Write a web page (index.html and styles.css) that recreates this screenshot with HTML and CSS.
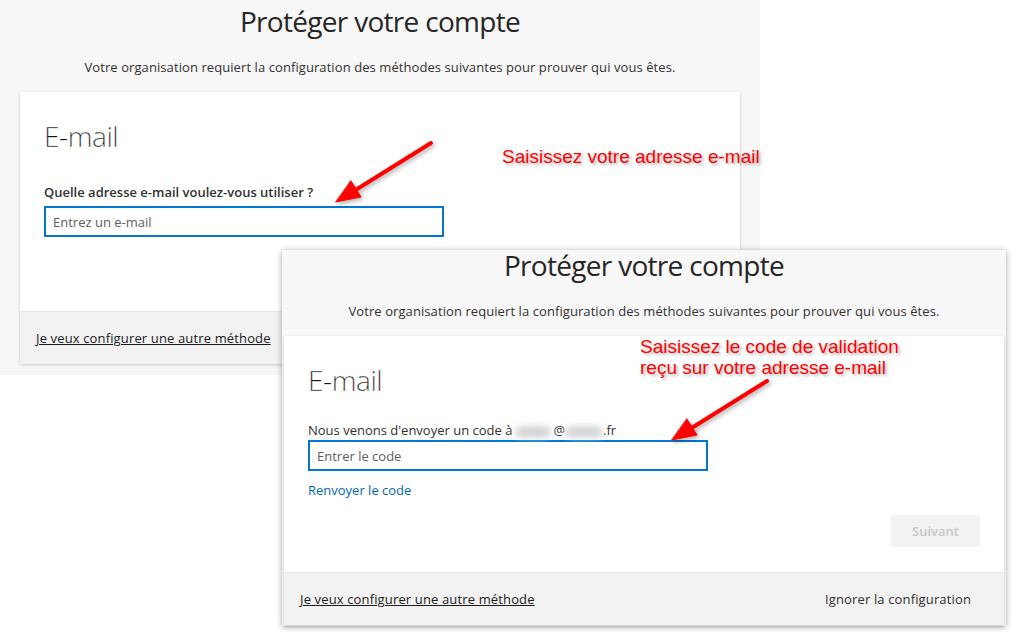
FILE: index.html
```html
<!DOCTYPE html>
<html lang="fr">
<head>
    <meta charset="utf-8">
    <title>Protéger votre compte</title>
    <link rel="stylesheet" href="styles.css">
</head>
<body>
    <div class="window window-email">
        <h1 class="page-title">Protéger votre compte</h1>
        <p class="page-intro">Votre organisation requiert la configuration des méthodes suivantes pour prouver qui vous êtes.</p>
        <div class="card">
            <div class="card-body">
                <h2 class="method-title">E-mail</h2>
                <label class="field-label" for="email">Quelle adresse e-mail voulez-vous utiliser ?</label>
                <input class="field" id="email" type="email" placeholder="Entrez un e-mail">
            </div>
            <div class="card-footer">
                <a href="#" class="footer-link">Je veux configurer une autre méthode</a>
            </div>
        </div>
    </div>

    <div class="window window-code">
        <h1 class="page-title">Protéger votre compte</h1>
        <p class="page-intro">Votre organisation requiert la configuration des méthodes suivantes pour prouver qui vous êtes.</p>
        <div class="card">
            <div class="card-body">
                <h2 class="method-title">E-mail</h2>
                <div class="sent-to">Nous venons d'envoyer un code à<span class="blurred b1"></span>@<span class="blurred b2"></span>.fr</div>
                <input class="field" id="code" type="text" placeholder="Entrer le code">
                <a href="#" class="resend">Renvoyer le code</a>
                <div class="actions">
                    <button class="btn-next" disabled>Suivant</button>
                </div>
            </div>
            <div class="card-footer">
                <a href="#" class="footer-link">Je veux configurer une autre méthode</a>
                <button class="btn-skip">Ignorer la configuration</button>
            </div>
        </div>
    </div>

    <!-- annotations -->
    <svg class="arrows" width="1012" height="635" viewBox="0 0 1012 635">
        <defs>
            <filter id="shadow" x="-20%" y="-20%" width="140%" height="140%">
                <feDropShadow dx="2" dy="2" stdDeviation="2" flood-color="#000" flood-opacity="0.3"/>
            </filter>
        </defs>
        <g filter="url(#shadow)" fill="#f00" stroke="#f00" stroke-linecap="round" stroke-linejoin="round">
            <line x1="431" y1="143" x2="354" y2="191" stroke-width="4"/>
            <polygon points="336,202 361,197 351,181" stroke-width="1"/>
            <line x1="767" y1="381" x2="690" y2="429" stroke-width="4"/>
            <polygon points="672,440 697,435 687,419" stroke-width="1"/>
        </g>
    </svg>
    <div class="callout callout-email">Saisissez votre adresse e-mail</div>
    <div class="callout callout-code">Saisissez le code de validation<br>reçu sur votre adresse e-mail</div>
</body>
</html>
```

FILE: styles.css
```css
body {
    margin: 0; width: 1012px; height: 635px; position: relative; overflow: hidden;
    background: #fff; color: #323130;
    font-family: "Open Sans", "Noto Sans", Arial, sans-serif; font-size: 13px;
}

/* the two screenshots lying on the canvas */
.window { position: absolute; background: #f7f7f7; box-sizing: border-box; }
.window-email { left: 0; top: 0; width: 760px; height: 375px; padding: 6px 20px 0; }
.window-code {
    left: 282px; top: 250px; width: 724px; height: 376px; padding: 0 2px;
    box-shadow: 0 1px 6px rgba(0, 0, 0, 0.35);
}

.page-title {
    margin: 0; font-size: 28px; line-height: 30px; font-weight: 400; letter-spacing: -0.7px;
    text-align: center; color: #262626;
}
.page-intro { margin: 21px 0 15px; line-height: 20px; text-align: center; letter-spacing: 0.08px; }

.card { background: #fff; box-shadow: 0 1px 3px rgba(0, 0, 0, 0.2); }
.card-body { padding: 26px 24px 0; height: 219px; box-sizing: border-box; }
.window-code .card-body { height: 236px; }
.card-footer {
    height: 53px; padding: 0 16px; box-sizing: border-box;
    display: flex; align-items: center; justify-content: space-between;
    background: #f2f2f2; border-top: 1px solid #e6e6e6;
}

/* Segoe UI Light look: thin the regular face with a white stroke */
.method-title {
    margin: 0 0 28px; font-size: 28px; line-height: 36px; font-weight: 300;
    letter-spacing: -0.4px; color: #111;
    -webkit-text-stroke: 0.3px #fff;
}
.window-code .method-title { margin-bottom: 23px; }
.field-label { display: block; font-weight: 600; line-height: 20px; margin-bottom: 4px; }
.sent-to { line-height: 19px; margin: 0; }
.blurred {
    display: inline-block; height: 12px; vertical-align: middle;
    background: #d6d6d6; border-radius: 6px; filter: blur(3px);
}
.b1 { width: 36px; margin: 0 2px 0 3px; }
.b2 { width: 38px; margin: 0; }

.field {
    display: block; width: 400px; height: 31px; box-sizing: border-box;
    border: 2px solid #0078d4; padding: 0 7px; margin: 0;
    font: inherit; color: #323130; outline: none; background: #fff;
}
.field::placeholder { color: #605e5c; }

.resend { display: inline-block; margin-top: 9px; line-height: 20px; color: #0067b8; text-decoration: none; }
.actions { display: flex; justify-content: flex-end; margin-top: 15px; }
.btn-next {
    width: 89px; height: 32px; border: none; border-radius: 2px;
    background: #f3f2f1; color: #c8c6c4; font: inherit; font-weight: 600;
}

.footer-link { color: #1b1b1b; letter-spacing: 0.14px; }
.btn-skip { border: none; background: none; padding: 0 17px 0 0; font: inherit; letter-spacing: 0.14px; color: #323130; }

/* red annotations drawn over the screenshots */
.arrows { position: absolute; left: 0; top: 0; pointer-events: none; }
.callout {
    position: absolute; color: #f00;
    font-family: "Liberation Sans", Arial, sans-serif; font-size: 19px; line-height: 21px;
    text-shadow: 2px 2px 3px rgba(0, 0, 0, 0.3);
}
.callout-email { left: 502px; top: 146px; }
.callout-code { left: 640px; top: 336px; }
```
